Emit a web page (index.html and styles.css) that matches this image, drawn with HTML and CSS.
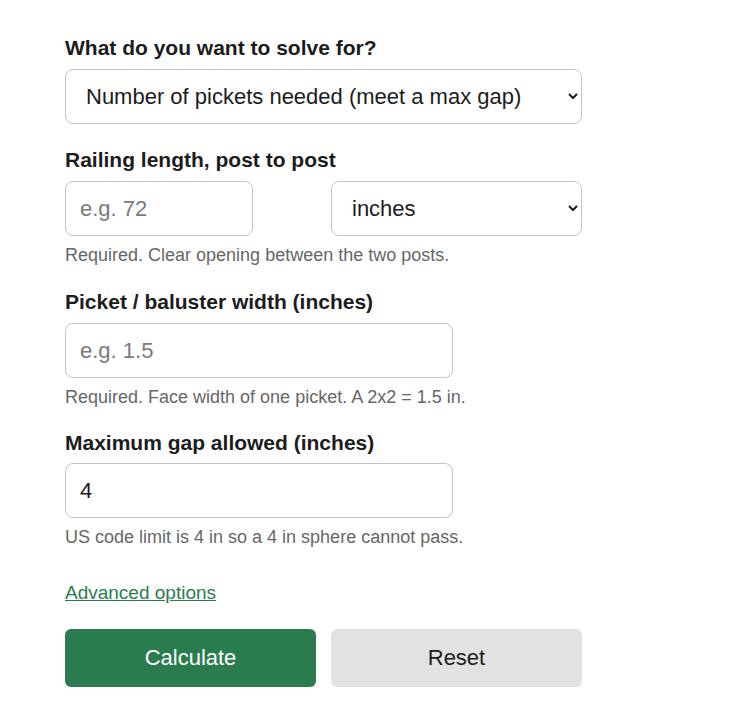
FILE: index.html
```html
<!DOCTYPE html>
<html lang="en">
<head>
    <meta charset="UTF-8">
    <meta name="viewport" content="width=device-width, initial-scale=1.0">
    <title>Picket Spacing Calculator</title>
    <link rel="stylesheet" href="styles.css">
</head>
<body>

    <form class="calc" onsubmit="return false">

        <!-- What to solve -->
        <div class="field">
            <label class="field-label" for="mode">What do you want to solve for?</label>
            <select id="mode" class="select">
                <option>Number of pickets needed (meet a max gap)</option>
                <option>Gap for a given number of pickets</option>
            </select>
        </div>

        <!-- Railing length + unit -->
        <div class="field">
            <label class="field-label" for="length">Railing length, post to post</label>
            <div class="pair">
                <input id="length" class="input" type="text" placeholder="e.g. 72">
                <select class="select">
                    <option>inches</option>
                    <option>feet</option>
                    <option>cm</option>
                </select>
            </div>
            <p class="hint">Required. Clear opening between the two posts.</p>
        </div>

        <!-- Picket width -->
        <div class="field">
            <label class="field-label" for="picket">Picket / baluster width (inches)</label>
            <input id="picket" class="input" type="text" placeholder="e.g. 1.5">
            <p class="hint">Required. Face width of one picket. A 2x2 = 1.5 in.</p>
        </div>

        <!-- Max gap -->
        <div class="field field-last">
            <label class="field-label" for="gap">Maximum gap allowed (inches)</label>
            <input id="gap" class="input" type="text" value="4">
            <p class="hint">US code limit is 4 in so a 4 in sphere cannot pass.</p>
        </div>

        <a class="advanced" href="#">Advanced options</a>

        <div class="actions">
            <button class="btn btn-primary" type="submit">Calculate</button>
            <button class="btn btn-secondary" type="reset">Reset</button>
        </div>

    </form>

</body>
</html>
```

FILE: styles.css
```css
body {
    margin: 0;
    background: #fff;
    color: #1c1c1c;
    font-family: "Liberation Sans", Arial, sans-serif;
}

/* Form column */
.calc {
    width: 517px;
    padding: 36px 0 30px 65px;
}

.field {
    margin-bottom: 24px;
}

.field-label {
    display: block;
    font-size: 21px;
    font-weight: bold;
    line-height: 24px;
    margin-bottom: 9px;
}

/* Inputs and selects */
.input,
.select {
    box-sizing: border-box;
    height: 55px;
    border: 1px solid #c4c4c4;
    border-radius: 8px;
    background: #fff;
    color: #1c1c1c;
    font-family: inherit;
    font-size: 22px;
    padding: 0 14px;
}

.input {
    display: block;
    width: 75%;
}

.input::placeholder {
    color: #7a7a7a;
}

.select {
    width: 100%;
    padding-left: 16px;
}

/* Length + unit side by side */
.pair {
    display: grid;
    grid-template-columns: 1fr 1fr;
    gap: 15px;
}

.hint {
    margin: 8px 0 0;
    font-size: 18px;
    line-height: 22px;
    color: #666;
}

.field-last .field-label {
    margin-top: -1px;
}

.field-last .input {
    margin-top: -1px;
}

.advanced {
    display: inline-block;
    margin-top: 10px;
    font-size: 19px;
    line-height: 22px;
    color: #2a7c4f;
}

/* Buttons */
.actions {
    display: grid;
    grid-template-columns: 1fr 1fr;
    gap: 15px;
    margin-top: 25px;
}

.btn {
    height: 58px;
    border: none;
    border-radius: 6px;
    font-family: inherit;
    font-size: 22px;
    cursor: pointer;
}

.btn-primary {
    background: #2a7c4f;
    color: #fff;
}

.btn-secondary {
    background: #e2e2e2;
    color: #1c1c1c;
}
```
